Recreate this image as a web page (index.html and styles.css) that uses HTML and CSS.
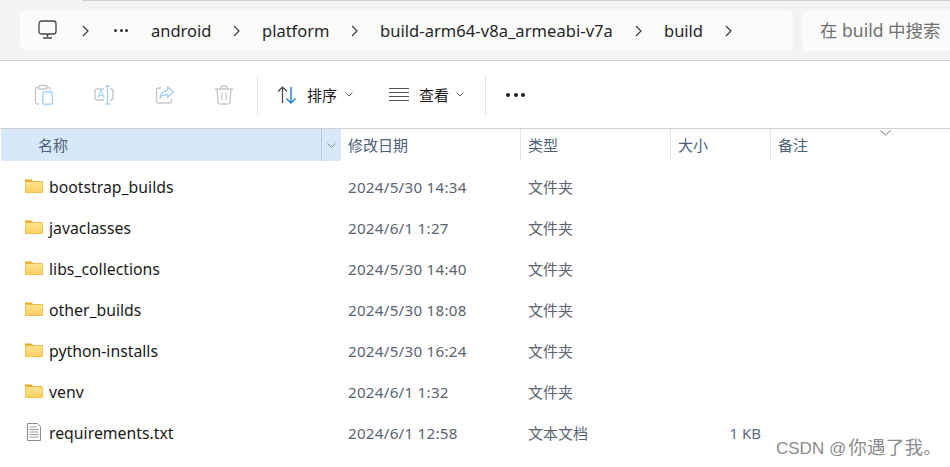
FILE: index.html
```html
<!DOCTYPE html>
<html lang="zh">
<head>
<meta charset="utf-8">
<title>build</title>
<link rel="stylesheet" href="styles.css">
</head>
<body>
<header class="addressbar">
  <div class="topline"></div>
  <div class="address-row">
    <nav class="crumbs">
      <svg class="pc" width="20" height="20" viewBox="0 0 20 20"><rect x="1" y="1" width="17" height="13" rx="2.5" fill="none" stroke="#444" stroke-width="1.3"/><path d="M9.500 14v3M5 18h9" stroke="#444" stroke-width="1.5" fill="none"/></svg>
      <svg class="chev c1" width="7" height="12" viewBox="0 0 7 12"><path d="M1 1l5 5-5 5" fill="none" stroke="#333" stroke-width="1.1"/></svg>
      <span class="more">
        <i class="dot"></i><i class="dot"></i><i class="dot"></i>
      </span>
      <span class="crumb c-android">android</span>
      <svg class="chev c2" width="7" height="12" viewBox="0 0 7 12"><path d="M1 1l5 5-5 5" fill="none" stroke="#333" stroke-width="1.1"/></svg>
      <span class="crumb c-platform">platform</span>
      <svg class="chev c3" width="7" height="12" viewBox="0 0 7 12"><path d="M1 1l5 5-5 5" fill="none" stroke="#333" stroke-width="1.1"/></svg>
      <span class="crumb c-arm">build-arm64-v8a_armeabi-v7a</span>
      <svg class="chev c4" width="7" height="12" viewBox="0 0 7 12"><path d="M1 1l5 5-5 5" fill="none" stroke="#333" stroke-width="1.1"/></svg>
      <span class="crumb c-build">build</span>
      <svg class="chev c5" width="7" height="12" viewBox="0 0 7 12"><path d="M1 1l5 5-5 5" fill="none" stroke="#333" stroke-width="1.1"/></svg>
    </nav>
    <div class="search">在 build 中搜索</div>
  </div>
</header>

<section class="toolbar">
  <svg class="tool t-paste" width="20" height="22" viewBox="0 0 20 22"><path d="M13 3.500h1.500a1.500 1.500 0 0 1 1.500 1.500v1M5 20H3a1.500 1.500 0 0 1-1.500-1.500V5A1.500 1.500 0 0 1 3 3.500h2" fill="none" stroke="#c8c8c8" stroke-width="1.4"/><rect x="5" y="1.500" width="8" height="3.500" rx="1.500" fill="none" stroke="#c8c8c8" stroke-width="1.4"/><rect x="8.700" y="7.700" width="9.600" height="12.600" rx="1.800" fill="none" stroke="#a9d3f5" stroke-width="1.4"/></svg>
  <svg class="tool t-rename" width="20" height="20" viewBox="0 0 20 20"><path d="M10 4H3a2 2 0 0 0-2 2v7a2 2 0 0 0 2 2h7M16 4h1a2 2 0 0 1 2 2v7a2 2 0 0 1-2 2h-1" fill="none" stroke="#c8c8c8" stroke-width="1.4"/><path d="M11 1h5M13.500 1v18M11 19h5" fill="none" stroke="#a9d3f5" stroke-width="1.4"/><path d="M4 13l3-8 3 8M5 10.500h4" fill="none" stroke="#a9d3f5" stroke-width="1.2"/></svg>
  <svg class="tool t-share" width="20" height="20" viewBox="0 0 20 20"><path d="M6 3H3.500A2 2 0 0 0 1.500 5v11a2 2 0 0 0 2 2h11a2 2 0 0 0 2-2v-2" fill="none" stroke="#c8c8c8" stroke-width="1.4"/><path d="M12.500 1.500L18.500 7l-6 5.500V9.500c-3.500 0-6 1-7.500 3.500 .5-4.500 3-7 7.500-7.500z" fill="none" stroke="#a9d3f5" stroke-width="1.4" stroke-linejoin="round"/></svg>
  <svg class="tool t-delete" width="18" height="20" viewBox="0 0 18 20"><path d="M0 4h18M6 4V2.500A1.500 1.500 0 0 1 7.500 1h3A1.500 1.500 0 0 1 12 2.500V4M2 4l1 13.500A1.800 1.800 0 0 0 4.800 19h8.400a1.800 1.800 0 0 0 1.800-1.500L16 4M7 8v7M11 8v7" fill="none" stroke="#c8c8c8" stroke-width="1.4"/></svg>
  <div class="sep sep1"></div>
  <svg class="sort-icon" width="20" height="18" viewBox="0 0 20 18"><path d="M5.500 17V1M1 5.500L5.500 1 10 5.500" fill="none" stroke="#444" stroke-width="1.2"/><path d="M14 1v16M9.500 12.500L14 17l4.500-4.500" fill="none" stroke="#1a7fd4" stroke-width="1.4"/></svg>
  <span class="tool-label l-sort">排序</span>
  <svg class="caret cr-sort" width="8" height="5" viewBox="0 0 8 5"><path d="M.5.500L4 4 7.500.500" fill="none" stroke="#666" stroke-width="1"/></svg>
  <span class="lines"><i></i><i></i><i></i><i></i></span>
  <span class="tool-label l-view">查看</span>
  <svg class="caret cr-view" width="8" height="5" viewBox="0 0 8 5"><path d="M.5.500L4 4 7.500.500" fill="none" stroke="#666" stroke-width="1"/></svg>
  <div class="sep sep2"></div>
  <span class="more-h"><i class="bigdot"></i><i class="bigdot"></i><i class="bigdot"></i></span>
</section>

<main class="list">
  <div class="head">
    <div class="hcell h-name"><span class="h-label">名称</span><span class="h-drop"><svg width="9" height="5" viewBox="0 0 9 5"><path d="M.5.500L4.500 4.500 8.500.500" fill="none" stroke="#7f8c99" stroke-width="1"/></svg></span></div>
    <div class="hcell h-date"><span class="h-label">修改日期</span></div>
    <div class="hcell h-type"><span class="h-label">类型</span></div>
    <div class="hcell h-size"><span class="h-label">大小</span></div>
    <div class="hcell h-note"><span class="h-label">备注</span><svg class="h-up" width="11" height="6" viewBox="0 0 11 6"><path d="M.5.500L5.500 5 10.500.500" fill="none" stroke="#777" stroke-width="1"/></svg></div>
  </div>

  <div class="row"><div class="name"><svg class="folder" width="18" height="14" viewBox="1 1 18 14"><use href="#fd"/></svg>bootstrap_builds</div><div class="date">2024/5/30 14:34</div><div class="type">文件夹</div><div class="size"></div></div>
  <div class="row"><div class="name"><svg class="folder" width="18" height="14" viewBox="1 1 18 14"><use href="#fd"/></svg>javaclasses</div><div class="date">2024/6/1 1:27</div><div class="type">文件夹</div><div class="size"></div></div>
  <div class="row"><div class="name"><svg class="folder" width="18" height="14" viewBox="1 1 18 14"><use href="#fd"/></svg>libs_collections</div><div class="date">2024/5/30 14:40</div><div class="type">文件夹</div><div class="size"></div></div>
  <div class="row"><div class="name"><svg class="folder" width="18" height="14" viewBox="1 1 18 14"><use href="#fd"/></svg>other_builds</div><div class="date">2024/5/30 18:08</div><div class="type">文件夹</div><div class="size"></div></div>
  <div class="row"><div class="name"><svg class="folder" width="18" height="14" viewBox="1 1 18 14"><use href="#fd"/></svg>python-installs</div><div class="date">2024/5/30 16:24</div><div class="type">文件夹</div><div class="size"></div></div>
  <div class="row"><div class="name"><svg class="folder" width="18" height="14" viewBox="1 1 18 14"><use href="#fd"/></svg>venv</div><div class="date">2024/6/1 1:32</div><div class="type">文件夹</div><div class="size"></div></div>
  <div class="row"><div class="name"><svg class="doc" width="14" height="18" viewBox="3 0 14 18"><path d="M3.500.500h10l3 3v14h-13z" fill="#fff" stroke="#8c8c8c"/><path d="M5.500 4h7M5.500 6.500h9M5.500 9h9M5.500 11.500h9M5.500 14h9" stroke="#9a9a9a"/></svg>requirements.txt</div><div class="date">2024/6/1 12:58</div><div class="type">文本文档</div><div class="size">1 KB</div></div>
</main>

<div class="watermark">CSDN @<span class="wm-cjk">你遇了我。</span></div>

<svg class="defs" width="0" height="0">
  <defs>
    <linearGradient id="fg" x1="0" y1="0" x2="0" y2="1"><stop offset="0" stop-color="#ffe38f"/><stop offset="1" stop-color="#fbcf5f"/></linearGradient>
    <g id="fd">
      <path d="M1 1.500h6.500l2 2H1z" fill="#e8a91e"/>
      <rect x="1" y="3.500" width="18" height="11.500" rx=".8" fill="url(#fg)" stroke="#e6ae30" stroke-width=".8"/>
    </g>
  </defs>
</svg>
</body>
</html>
```

FILE: styles.css
```css
* { box-sizing: border-box; }
html, body { margin: 0; padding: 0; }
body {
  width: 950px;
  height: 467px;
  overflow: hidden;
  background: #fff;
  color: #1a1a1a;
  font-family: "Noto Sans", "Noto Sans CJK SC", sans-serif;
  position: relative;
}
svg { display: block; flex: none; }
i { display: block; }

/* address bar */
.addressbar {
  height: 61px;
  background: #f3f3f3;
  border-bottom: 1px solid #cfcfcf;
}
.topline { height: 1px; margin-left: 82px; background: #cfcfcf; }
.address-row { display: flex; padding: 9px 0 0 20px; gap: 9px; }
.crumbs {
  width: 773px;
  height: 40px;
  background: #fbfbfb;
  border-radius: 6px;
  display: flex;
  align-items: center;
  font-size: 16.5px;
  color: #262626;
}
.pc { margin-left: 18px; }
.chev { margin-top: 1px; }
.c1 { margin-left: 24px; }
.more { display: flex; gap: 2.5px; margin-left: 25px; }
.dot { width: 3px; height: 3px; border-radius: 50%; background: #333; }
.crumb { white-space: nowrap; }
.c-android { margin-left: 23px; width: 60px; }
.c2 { margin-left: 22px; }
.c-platform { margin-left: 22px; width: 66px; }
.c3 { margin-left: 23px; }
.c-arm { margin-left: 22px; width: 233px; letter-spacing: .06px; }
.c4 { margin-left: 22px; }
.c-build { margin-left: 22px; width: 39px; }
.c5 { margin-left: 22px; }
.search {
  flex: 1;
  height: 41px;
  background: #fbfbfb;
  border-radius: 6px 0 0 6px;
  padding-left: 18px;
  font-size: 17.5px;
  line-height: 41px;
  color: #707070;
  white-space: nowrap;
}

/* toolbar */
.toolbar {
  height: 68px;
  border-bottom: 1px solid #cfcfcf;
  display: flex;
  align-items: center;
  font-size: 15px;
}
.t-paste { margin-left: 34px; }
.t-rename { margin-left: 40px; }
.t-share { margin-left: 41px; }
.t-delete { margin-left: 40px; }
.sep { width: 1px; height: 40px; background: #e6e6e6; }
.sep1 { margin-left: 24px; }
.sort-icon { margin-left: 19px; }
.tool-label { white-space: nowrap; color: #1a1a1a; }
.l-sort { margin-left: 10px; }
.cr-sort { margin-left: 8px; }
.lines { display: flex; flex-direction: column; gap: 3px; margin-left: 36px; }
.lines i { width: 20px; height: 1px; background: #555; }
.l-view { margin-left: 10px; }
.cr-view { margin-left: 7px; }
.sep2 { margin-left: 21px; }
.more-h { display: flex; gap: 3.500px; margin-left: 20px; }
.bigdot { width: 4px; height: 4px; border-radius: 50%; background: #222; }

/* list */
.list { padding-left: 1px; }
.head { display: flex; height: 32px; font-size: 15px; color: #4c607a; }
.hcell { display: flex; align-items: center; height: 32px; padding-left: 7px; border-left: 1px solid #e5e5e5; }
.h-label { padding-bottom: 2px; }
.h-name {
  width: 340px;
  padding-left: 37px;
  justify-content: space-between;
  padding-right: 0;
  border-left: 0;
  background: #d7e9f8;
  border-radius: 0 0 2px 2px;
}
.h-drop {
  width: 20px;
  height: 32px;
  border-left: 1px solid #b6cde0;
  display: flex;
  align-items: center;
  justify-content: center;
}
.h-date { width: 179px; border-left: 0; }
.h-type { width: 150px; }
.h-size { width: 100px; }
.h-note { width: 180px; position: relative; }
.h-up { position: absolute; left: 109px; top: 1px; }

.row {
  display: flex;
  height: 41px;
  align-items: center;
  font-size: 15px;
}
.head + .row { margin-top: 5px; }
.name {
  width: 340px;
  display: flex;
  align-items: center;
  padding-left: 24px;
  gap: 6px;
  font-size: 15.8px;
  line-height: 22px;
  color: #1a1a1a;
  white-space: nowrap;
}
.folder { margin-top: -2px; }
.doc { margin: -2px 2px 0 2px; }
.date { width: 180px; padding-left: 7px; color: #5a6470; letter-spacing: .25px; font-size: 15.2px; }
.type { width: 150px; padding-left: 7px; color: #5a6470; }
.size { width: 90px; text-align: right; color: #5a6c80; }

.watermark {
  position: absolute;
  left: 776px;
  top: 436px;
  font-family: "Liberation Sans", "Noto Sans CJK SC", sans-serif;
  font-size: 17px;
  line-height: 24px;
  color: #8c8c8c;
  white-space: nowrap;
}
.wm-cjk { font-size: 18.500px; margin-left: 2px; letter-spacing: .3px; }
.defs { position: absolute; }
```
